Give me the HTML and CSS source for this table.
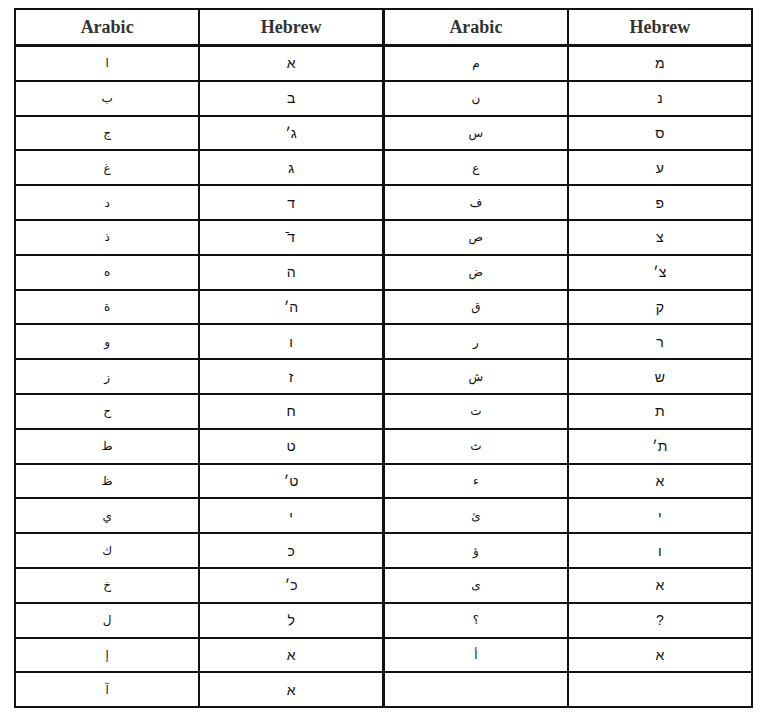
FILE: index.html
```html
<!DOCTYPE html>
<html lang="en">
<head>
<meta charset="utf-8">
<title>Arabic – Hebrew</title>
<link rel="stylesheet" href="styles.css">
</head>
<body>
<table class="map">
  <thead>
    <tr>
      <th>Arabic</th><th>Hebrew</th><th class="split">Arabic</th><th>Hebrew</th>
    </tr>
  </thead>
  <tbody>
    <tr><td class="ar">ا</td><td>א</td><td class="ar split">م</td><td>מ</td></tr>
    <tr><td class="ar">ب</td><td>ב</td><td class="ar split">ن</td><td>נ</td></tr>
    <tr><td class="ar">ج</td><td>ג׳</td><td class="ar split">س</td><td>ס</td></tr>
    <tr><td class="ar">غ</td><td>ג</td><td class="ar split">ع</td><td>ע</td></tr>
    <tr><td class="ar">د</td><td>ד</td><td class="ar split">ف</td><td>פ</td></tr>
    <tr><td class="ar">ذ</td><td>ד̄</td><td class="ar split">ص</td><td>צ</td></tr>
    <tr><td class="ar">ه</td><td>ה</td><td class="ar split">ض</td><td>צ׳</td></tr>
    <tr><td class="ar">ة</td><td>ה׳</td><td class="ar split">ق</td><td>ק</td></tr>
    <tr><td class="ar">و</td><td>ו</td><td class="ar split">ر</td><td>ר</td></tr>
    <tr><td class="ar">ز</td><td>ז</td><td class="ar split">ش</td><td>ש</td></tr>
    <tr><td class="ar">ح</td><td>ח</td><td class="ar split">ت</td><td>ת</td></tr>
    <tr><td class="ar">ط</td><td>ט</td><td class="ar split">ث</td><td>ת׳</td></tr>
    <tr><td class="ar">ظ</td><td>ט׳</td><td class="ar split">ء</td><td>א</td></tr>
    <tr><td class="ar">ي</td><td>י</td><td class="ar split">ئ</td><td>י</td></tr>
    <tr><td class="ar">ك</td><td>כ</td><td class="ar split">ؤ</td><td>ו</td></tr>
    <tr><td class="ar">خ</td><td>כ׳</td><td class="ar split">ى</td><td>א</td></tr>
    <tr><td class="ar">ل</td><td>ל</td><td class="ar split">؟</td><td>?</td></tr>
    <tr><td class="ar">إ</td><td>א</td><td class="ar split">أ</td><td>א</td></tr>
    <tr><td class="ar">آ</td><td>א</td><td class="ar split"></td><td></td></tr>
  </tbody>
</table>
</body>
</html>
```

FILE: styles.css
```css
html, body {
  background: #ffffff;
}
body {
  margin: 8px 0 0 14px;
}
.map {
  border-collapse: collapse;
  width: 739px;
  table-layout: fixed;
  border: 2px solid #111;
}
.map th,
.map td {
  border: 2px solid #111;
  text-align: center;
  vertical-align: middle;
  padding: 0;
}
.map th {
  height: 34px;
  font-family: "Liberation Serif", "Times New Roman", serif;
  font-weight: bold;
  font-size: 18px;
  color: #333;
  border-bottom: 3px solid #111;
}
.map td {
  height: 32.8px;
  font-family: "Liberation Sans", "DejaVu Sans", Arial, sans-serif;
  font-size: 14px;
  color: #111;
}
.map td.ar {
  font-family: "DejaVu Sans", "Liberation Sans", sans-serif;
  font-size: 12px;
}
.map .split {
  border-left: 3px solid #111;
}
```
